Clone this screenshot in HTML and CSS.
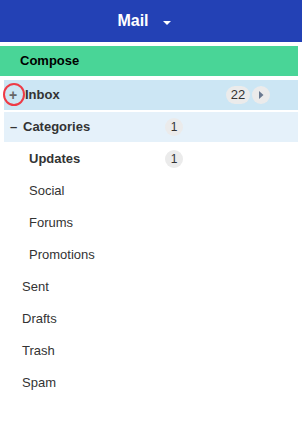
FILE: index.html
```html
<!DOCTYPE html>
<html>
<head>
<meta charset="utf-8">
<link rel="stylesheet" href="styles.css">
</head>
<body>
<div class="app">
  <header class="topbar">
    <span class="title">Mail</span>
    <span class="caret"></span>
  </header>
  <div class="compose">Compose</div>
  <ul class="folders">
    <li class="row inbox">
      <span class="toggle plus">+<span class="ring"></span></span>
      <span class="label bold">Inbox</span>
      <span class="pill">22</span>
      <span class="arrow"><svg width="18" height="18" viewBox="0 0 18 18"><path d="M7 5 L11.5 9 L7 13 Z" fill="#6a7990"/></svg></span>
    </li>
    <li class="row cats">
      <span class="toggle minus">–</span>
      <span class="label bold">Categories</span>
      <span class="dot dot-cat">1</span>
    </li>
    <li class="row sub">
      <span class="label bold">Updates</span>
      <span class="dot dot-sub">1</span>
    </li>
    <li class="row sub"><span class="label">Social</span></li>
    <li class="row sub"><span class="label">Forums</span></li>
    <li class="row sub"><span class="label">Promotions</span></li>
    <li class="row top"><span class="label">Sent</span></li>
    <li class="row top"><span class="label">Drafts</span></li>
    <li class="row top"><span class="label">Trash</span></li>
    <li class="row top"><span class="label">Spam</span></li>
  </ul>
</div>
</body>
</html>
```
FILE: styles.css
```css
* { box-sizing: border-box; }
html, body { margin: 0; padding: 0; background: #fff; }
body { font-family: "Liberation Sans", Arial, sans-serif; font-size: 13px; color: #333; }
.app { width: 302px; }
.topbar {
  height: 42px;
  background: #2341b5;
  display: flex;
  align-items: center;
  justify-content: center;
  gap: 14px;
  padding-right: 14px;
}
.title { color: #fff; font-weight: bold; font-size: 16px; }
.caret {
  width: 0; height: 0;
  border-left: 4px solid transparent;
  border-right: 4px solid transparent;
  border-top: 4px solid #fff;
  margin-top: 3px;
}
.compose {
  margin-top: 4px;
  width: 298px;
  height: 30px;
  background: #49d597;
  color: #000;
  font-weight: bold;
  display: flex;
  align-items: center;
  padding-left: 20px;
  padding-bottom: 1px;
}
.folders { list-style: none; margin: 4px 0 0 4px; padding: 0; width: 294px; display: flex; flex-direction: column; gap: 2px; }
.row { height: 30px; display: flex; align-items: center; position: relative; padding-bottom: 1px; }
.bold { font-weight: bold; }
.inbox { background: #cce6f4; padding-left: 4px; }
.cats { background: #e5f1fa; padding-left: 6px; }
.sub { padding-left: 25px; }
.top { padding-left: 18px; }
.toggle { color: #555; font-weight: bold; }
.plus { position: relative; width: 17px; font-size: 14px; color: #666; padding-left: 1px; }
.ring {
  position: absolute;
  left: -5px; top: -4px;
  width: 22px; height: 23px;
  border: 2px solid #ee3b46;
  border-radius: 50%;
}
.minus { width: 13px; color: #333; }
.pill {
  margin-left: auto;
  background: #ebebeb;
  border-radius: 9px;
  height: 18px;
  min-width: 24px;
  padding: 0 4px;
  display: flex; align-items: center; justify-content: center;
  font-size: 13px; color: #333;
}
.arrow {
  margin-left: 2px;
  margin-right: 28px;
  width: 18px; height: 18px;
  border-radius: 50%;
  background: #ebebeb;
  display: flex;
}
.dot {
  position: absolute;
  left: 161px;
  width: 18px; height: 18px;
  border-radius: 50%;
  background: #ebebeb;
  display: flex; align-items: center; justify-content: center;
  font-size: 12px; color: #333;
}
```
